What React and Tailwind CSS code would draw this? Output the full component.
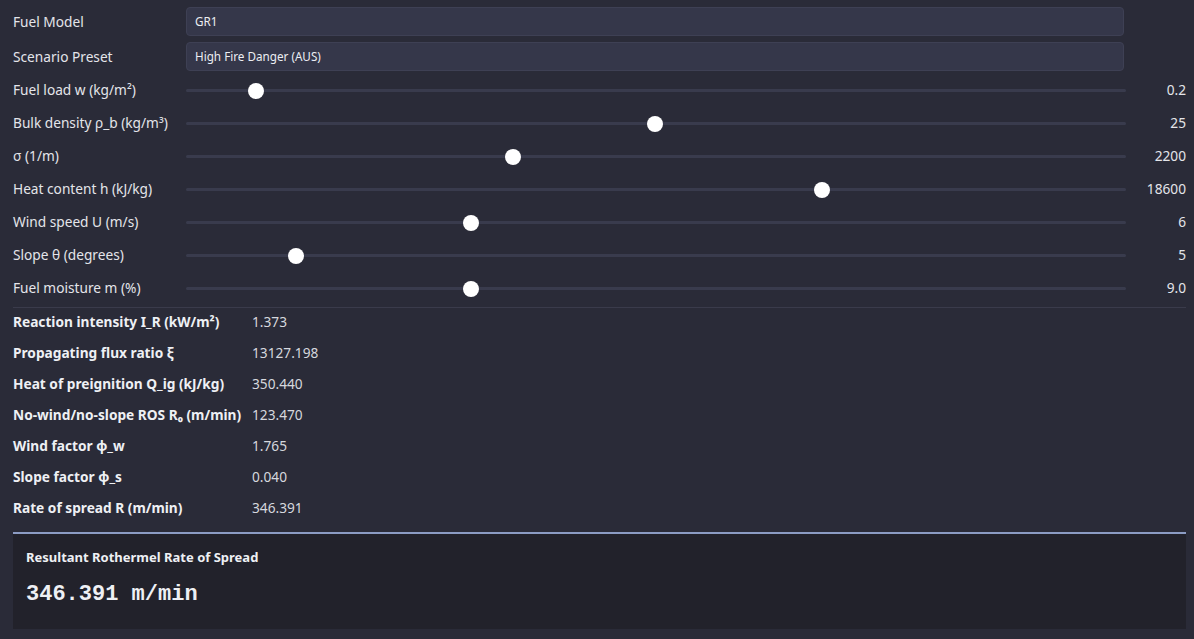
import React from "react";

const sliders = [
  { label: "Fuel load w (kg/m²)", value: "0.2", frac: 0.0671 },
  { label: "Bulk density ρ_b (kg/m³)", value: "25", frac: 0.4989 },
  { label: "σ (1/m)", value: "2200", frac: 0.3452 },
  { label: "Heat content h (kJ/kg)", value: "18600", frac: 0.6797 },
  { label: "Wind speed U (m/s)", value: "6", frac: 0.2998 },
  { label: "Slope θ (degrees)", value: "5", frac: 0.1104 },
  { label: "Fuel moisture m (%)", value: "9.0", frac: 0.2998 },
];

const results = [
  ["Reaction intensity I_R (kW/m²)", "1.373"],
  ["Propagating flux ratio ξ", "13127.198"],
  ["Heat of preignition Q_ig (kJ/kg)", "350.440"],
  ["No-wind/no-slope ROS R₀ (m/min)", "123.470"],
  ["Wind factor ϕ_w", "1.765"],
  ["Slope factor ϕ_s", "0.040"],
  ["Rate of spread R (m/min)", "346.391"],
];

function Slider({ frac }) {
  return (
    <div className="relative h-full flex items-center">
      <div className="w-full h-[3px] bg-[#393b4d] rounded-sm" />
      <div
        className="absolute top-1/2 -translate-y-1/2 w-4 h-4 rounded-full bg-white"
        style={{ left: `calc(${frac} * (100% - 16px))` }}
      />
    </div>
  );
}

export default function App() {
  return (
    <div
      className="w-[1194px] h-[639px] bg-[#2a2b38] text-[#e4e5ea] pl-[13px] pr-[8px] pt-[4px] overflow-hidden"
      style={{ fontFamily: '"Noto Sans", "Open Sans", sans-serif' }}
    >
      <div className="grid grid-cols-[173px_940px_1fr] text-[13.7px]">
        <div className="h-[35px] flex items-center pt-px">Fuel Model</div>
        <div className="h-[35px] flex items-center pr-[2px]">
          <div className="w-full h-[29px] rounded-[4px] bg-[#35374a] border border-[#3e4054] flex items-center pl-[8px] text-[11.7px] text-[#eceef3]">
            GR1
          </div>
        </div>
        <div />
        <div className="h-[35px] flex items-center pt-px">Scenario Preset</div>
        <div className="h-[35px] flex items-center pr-[2px]">
          <div className="w-full h-[29px] rounded-[4px] bg-[#35374a] border border-[#3e4054] flex items-center pl-[8px] text-[11.7px] text-[#eceef3]">
            High Fire Danger (AUS)
          </div>
        </div>
        <div />
        {sliders.map((s) => (
          <React.Fragment key={s.label}>
            <div className="h-[33px] flex items-center whitespace-nowrap">{s.label}</div>
            <div className="h-[33px]">
              <Slider frac={s.frac} />
            </div>
            <div className="h-[33px] flex items-center justify-end">{s.value}</div>
          </React.Fragment>
        ))}
      </div>
      <div className="mt-[2px] h-px bg-[#3a3b4b]" />
      <div className="grid grid-cols-[239px_1fr] text-[13.7px] -mt-[1px]">
        {results.map(([k, v]) => (
          <React.Fragment key={k}>
            <div className="h-[31px] flex items-center font-bold text-[#eef0f4] whitespace-nowrap">{k}</div>
            <div className="h-[31px] flex items-center text-[#d6d8de]">{v}</div>
          </React.Fragment>
        ))}
      </div>
      <div className="mt-[8px] border-t-2 border-[#8c9cc4] bg-[#22222b] h-[97px] px-[13px] pt-[14px]">
        <div className="text-[13px] font-bold text-[#eef0f4]">Resultant Rothermel Rate of Spread</div>
        <div
          className="mt-[10px] text-[22px] font-bold text-[#eef0f4]"
          style={{ fontFamily: '"Liberation Mono", "DejaVu Sans Mono", monospace' }}
        >
          346.391 m/min
        </div>
      </div>
    </div>
  );
}
